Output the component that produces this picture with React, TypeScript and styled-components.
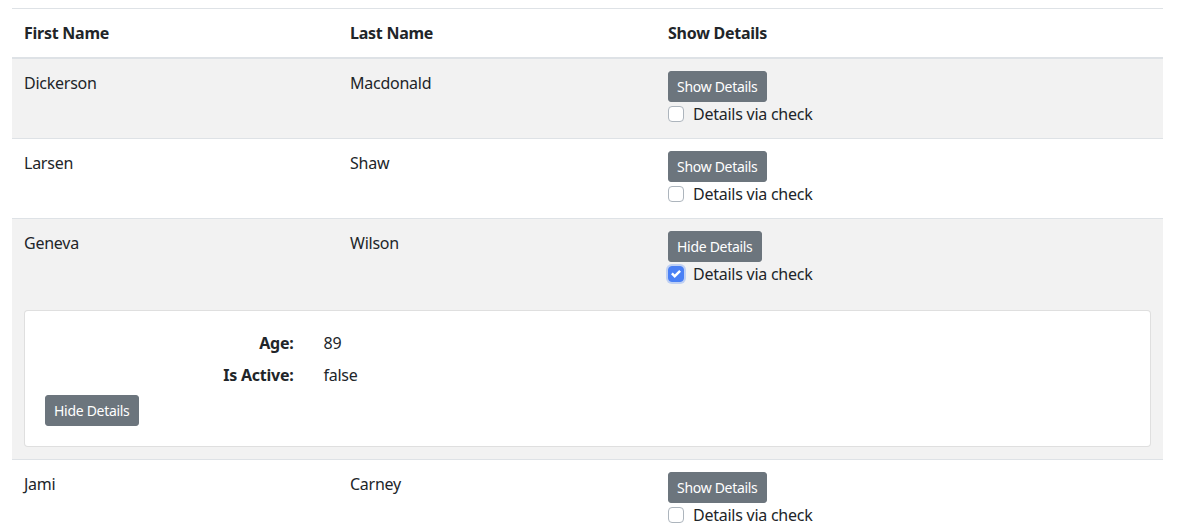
import React, { useState } from "react";
import styled, { createGlobalStyle } from "styled-components";

const Global = createGlobalStyle`
  * { box-sizing: border-box; }
  body {
    margin: 8px 17px 0 12px;
    font-family: "Noto Sans", "Open Sans", sans-serif;
    font-size: 16px;
    line-height: 1.5;
    letter-spacing: -0.25px;
    color: #212529;
    background: #fff;
  }
`;

const Table = styled.table`
  width: 100%;
  border-collapse: collapse;
  color: #212529;
`;

const HeadCell = styled.th<{ $w?: string }>`
  text-align: left;
  font-weight: 700;
  padding: 12px;
  vertical-align: bottom;
  border-top: 1px solid #dee2e6;
  border-bottom: 2px solid #dee2e6;
  width: ${(p) => p.$w || "auto"};
`;

const Row = styled.tr<{ $striped: boolean }>`
  background: ${(p) => (p.$striped ? "#f2f2f2" : "#fff")};
`;

const Cell = styled.td<{ $noBorder?: boolean }>`
  padding: 12px;
  vertical-align: top;
  border-top: ${(p) => (p.$noBorder ? "none" : "1px solid #dee2e6")};
`;

const Button = styled.button`
  display: inline-block;
  font-family: inherit;
  font-size: 14px;
  line-height: 21px;
  letter-spacing: -0.3px;
  padding: 4px 8px;
  color: #fff;
  background: #6c757d;
  border: 1px solid #6c757d;
  border-radius: 3px;
  cursor: pointer;
`;

const CheckLabel = styled.label`
  display: flex;
  align-items: flex-start;
  min-height: 24px;
  cursor: pointer;
  position: relative;
`;

const HiddenInput = styled.input`
  position: absolute;
  opacity: 0;
  width: 0;
  height: 0;
`;

const Box = styled.span<{ $checked: boolean }>`
  width: 16px;
  height: 16px;
  margin-top: 4px;
  margin-right: 9px;
  border-radius: 4px;
  border: 1px solid ${(p) => (p.$checked ? "#4a80f5" : "#adb5bd")};
  background: ${(p) => (p.$checked ? "#4a80f5" : "#fff")};
  box-shadow: ${(p) => (p.$checked ? "0 0 0 2px rgba(74,128,245,0.3)" : "none")};
  display: flex;
  align-items: center;
  justify-content: center;
  flex-shrink: 0;
`;

const Card = styled.div`
  background: #fff;
  border: 1px solid rgba(0, 0, 0, 0.125);
  border-radius: 4px;
  padding: 20px;
`;

const DetailLine = styled.div`
  display: grid;
  grid-template-columns: 248.5px 1fr;
  column-gap: 30px;
  margin-bottom: 8px;
`;

const DetailKey = styled.b`
  text-align: right;
  font-weight: 700;
`;

const people = [
  { first: "Dickerson", last: "Macdonald", age: 40, active: true },
  { first: "Larsen", last: "Shaw", age: 21, active: false },
  { first: "Geneva", last: "Wilson", age: 89, active: false },
  { first: "Jami", last: "Carney", age: 38, active: true },
];

function Check({ checked, onChange }: { checked: boolean; onChange: () => void }) {
  return (
    <CheckLabel>
      <HiddenInput type="checkbox" checked={checked} onChange={onChange} />
      <Box $checked={checked}>
        {checked && (
          <svg width="10" height="10" viewBox="0 0 8 8">
            <path fill="#fff" d="M6.564.75l-3.59 3.612-1.538-1.55L0 4.26l2.974 2.99L8 2.193z" />
          </svg>
        )}
      </Box>
      Details via check
    </CheckLabel>
  );
}

export default function App() {
  const [open, setOpen] = useState<boolean[]>([false, false, true, false]);
  const toggle = (i: number) => setOpen((o) => o.map((v, j) => (j === i ? !v : v)));
  return (
    <>
      <Global />
      <Table>
        <thead>
          <tr>
            <HeadCell $w="326px">First Name</HeadCell>
            <HeadCell $w="318px">Last Name</HeadCell>
            <HeadCell>Show Details</HeadCell>
          </tr>
        </thead>
        <tbody>
          {people.map((p, i) => (
            <React.Fragment key={p.first}>
              <Row $striped={i % 2 === 0}>
                <Cell>{p.first}</Cell>
                <Cell>{p.last}</Cell>
                <Cell>
                  <div>
                    <Button onClick={() => toggle(i)}>{open[i] ? "Hide Details" : "Show Details"}</Button>
                  </div>
                  <Check checked={open[i]} onChange={() => toggle(i)} />
                </Cell>
              </Row>
              {open[i] && (
                <Row $striped={i % 2 === 0}>
                  <Cell colSpan={3} $noBorder>
                    <Card>
                      <DetailLine>
                        <DetailKey>Age:</DetailKey>
                        <span>{p.age}</span>
                      </DetailLine>
                      <DetailLine>
                        <DetailKey>Is Active:</DetailKey>
                        <span>{String(p.active)}</span>
                      </DetailLine>
                      <Button onClick={() => toggle(i)}>Hide Details</Button>
                    </Card>
                  </Cell>
                </Row>
              )}
            </React.Fragment>
          ))}
        </tbody>
      </Table>
    </>
  );
}
